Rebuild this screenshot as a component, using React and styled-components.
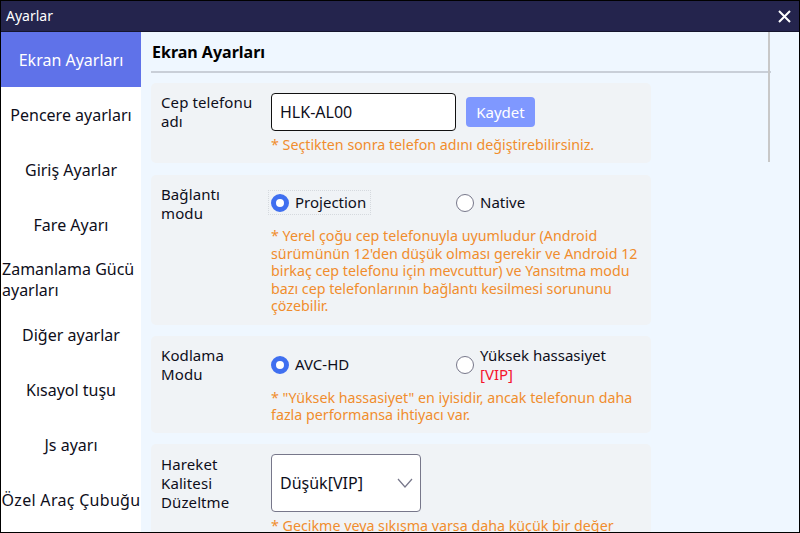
import React from 'react';
import styled, { createGlobalStyle } from 'styled-components';

const Global = createGlobalStyle`
  html, body { margin: 0; padding: 0; height: 100%; overflow: hidden; }
  #root { height: 100%; }
  * { box-sizing: border-box; }
`;

const Win = styled.div`
  width: 800px; height: 533px; border: 1px solid #000;
  display: flex; flex-direction: column; overflow: hidden;
  font-family: "Noto Sans", "Open Sans", sans-serif; font-size: 15px; color: #0e0e1a;
  background: #eff7ff;
`;
const TitleBar = styled.header`
  height: 31px; flex: none; background: #24244d; color: #fff;
  display: flex; align-items: center; justify-content: space-between;
  padding: 0 8px 0 5px; font-size: 14px; border-bottom: 1px solid #15152e;
`;
const TitleText = styled.span`margin-top: -2px;`;
const Close = styled.svg`width: 13px; height: 13px; display: block;`;
const Body = styled.div`flex: 1; display: flex; min-height: 0;`;
const Side = styled.nav`width: 140px; flex: none; background: #fff; display: flex; flex-direction: column; font-size: 16px;`;
const Item = styled.div`
  height: 55px; flex: none; display: flex; align-items: center; justify-content: center;
  text-align: ${p => (p.$wrap ? 'left' : 'center')}; line-height: 21px; white-space: ${p => (p.$wrap ? 'normal' : 'nowrap')};
  padding: ${p => (p.$wrap ? '0 0 0 1px' : '2px 0 0')};
  letter-spacing: ${p => (p.$wide ? '0.3px' : '0')};
  background: ${p => (p.$active ? '#5f72e9' : '#fff')};
  color: ${p => (p.$active ? '#fff' : '#0e0e1a')};
`;
const Main = styled.main`flex: 1; position: relative; min-width: 0; overflow: hidden; padding: 0 0 0 10px;`;
const Heading = styled.h1`
  margin: 0; width: 620px; height: 41px; border-bottom: 2px solid #c9cfd8;
  font-size: 16px; font-weight: 700; color: #000; line-height: 41px; padding-left: 1px;
`;
const Thumb = styled.div`position: absolute; top: 0; left: 627px; width: 2px; height: 130px; background: #c8c8c8;`;
const Card = styled.section`
  width: 500px; margin-top: ${p => p.$mt}px; background: #f0f3f6; border-radius: 5px;
  padding: 10px 10px 9.5px 10px; display: flex;
`;
const Label = styled.div`
  width: 110px; flex: none; line-height: 19px; padding-right: 10px; letter-spacing: 0.1px; margin-top: ${p => p.$mt || 0}px;
`;
const Control = styled.div`flex: 1; min-width: 0;`;
const Row = styled.div`display: flex; align-items: center;`;
const Input = styled.div`
  width: 185px; height: 38px; background: #fff; border: 1px solid #111; border-radius: 4px;
  padding-left: 8px; display: flex; align-items: center; font-size: 16px;
`;
const Save = styled.div`
  width: 69px; height: 30px; margin-left: 10px; border-radius: 4px; background: #7f98ff; color: #fff;
  display: flex; align-items: center; justify-content: center; font-size: 15px;
`;
const Hint = styled.p`
  margin: ${p => p.$mt}px 0 0; color: #f08d2d; font-size: 14.25px; line-height: 17.6px; width: 372px;
`;
const Radios = styled.div`display: flex; align-items: center; height: ${p => p.$h}px;`;
const Option = styled.div`
  width: 185px; display: flex; align-items: center; gap: 6px; position: relative; line-height: 19px;
`;
const Focus = styled.span`
  position: absolute; left: -3px; top: -3px; width: 103px; height: 25px; border: 1px dotted #d5d9de;
`;
const Dot = styled.span`
  width: 18px; height: 18px; flex: none; border-radius: 50%;
  ${p => (p.$on ? 'border: 5px solid #3f6ff0; background: #fff;' : 'border: 1px solid #77778a; background: #fff;')}
`;
const Vip = styled.span`color: #f5142d;`;
const Select = styled.div`
  width: 150px; height: 58px; background: #fff; border: 1px solid #77778a; border-radius: 4px;
  padding: 0 7px 0 8px; display: flex; align-items: center; justify-content: space-between; font-size: 16px;
`;
const Chevron = styled.svg`width: 16px; height: 16px; display: block;`;

const nav = ['Pencere ayarları', 'Giriş Ayarlar', 'Fare Ayarı'];
const nav2 = ['Diğer ayarlar', 'Kısayol tuşu', 'Js ayarı'];

export default function App() {
  return (
    <Win>
      <Global />
      <TitleBar>
        <TitleText>Ayarlar</TitleText>
        <Close viewBox="0 0 13 13"><path d="M1 1l11 11M12 1L1 12" stroke="#fff" strokeWidth="2" /></Close>
      </TitleBar>
      <Body>
        <Side>
          <Item $active>Ekran Ayarları</Item>
          {nav.map(n => <Item key={n}>{n}</Item>)}
          <Item $wrap>Zamanlama Gücü ayarları</Item>
          {nav2.map(n => <Item key={n}>{n}</Item>)}
          <Item $wide>Özel Araç Çubuğu</Item>
        </Side>
        <Main>
          <Heading>Ekran Ayarları</Heading>
          <Thumb />
          <Card $mt={10}>
            <Label>Cep telefonu adı</Label>
            <Control>
              <Row><Input>HLK-AL00</Input><Save>Kaydet</Save></Row>
              <Hint $mt={5}>* Seçtikten sonra telefon adını değiştirebilirsiniz.</Hint>
            </Control>
          </Card>
          <Card $mt={12}>
            <Label>Bağlantı modu</Label>
            <Control>
              <Radios $h={35}>
                <Option><Focus /><Dot $on /><span>Projection</span></Option>
                <Option><Dot /><span>Native</span></Option>
              </Radios>
              <Hint $mt={7}>* Yerel çoğu cep telefonuyla uyumludur (Android sürümünün 12'den düşük olması gerekir ve Android 12 birkaç cep telefonu için mevcuttur) ve Yansıtma modu bazı cep telefonlarının bağlantı kesilmesi sorununu çözebilir.</Hint>
            </Control>
          </Card>
          <Card $mt={11}>
            <Label>Kodlama Modu</Label>
            <Control>
              <Radios $h={38}>
                <Option><Dot $on /><span>AVC-HD</span></Option>
                <Option><Dot /><span>Yüksek hassasiyet<br /><Vip>[VIP]</Vip></span></Option>
              </Radios>
              <Hint $mt={5}>* "Yüksek hassasiyet" en iyisidir, ancak telefonun daha fazla performansa ihtiyacı var.</Hint>
            </Control>
          </Card>
          <Card $mt={11}>
            <Label $mt={1}>Hareket Kalitesi Düzeltme</Label>
            <Control>
              <Select>
                <span>Düşük[VIP]</span>
                <Chevron viewBox="0 0 16 16"><path d="M1 4l7 8 7-8" fill="none" stroke="#77778a" strokeWidth="1.2" /></Chevron>
              </Select>
              <Hint $mt={5}>* Gecikme veya sıkışma varsa daha küçük bir değer</Hint>
            </Control>
          </Card>
        </Main>
      </Body>
    </Win>
  );
}
